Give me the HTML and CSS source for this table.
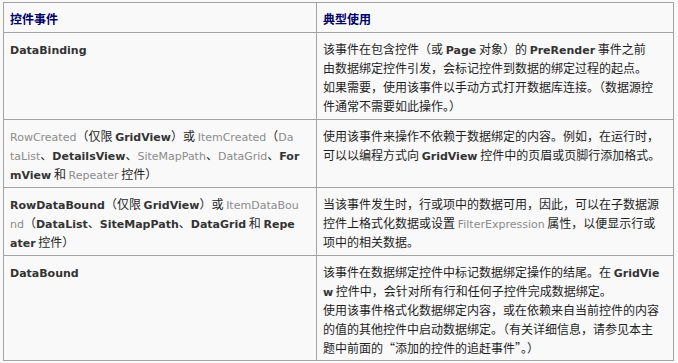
FILE: index.html
```html
<!DOCTYPE html>
<html lang="zh-CN">
<head>
<meta charset="utf-8">
<title>控件事件</title>
<link rel="stylesheet" href="styles.css">
</head>
<body>
<table class="events">
  <thead>
    <tr>
      <th class="col-event"><div class="ln">控件事件</div></th>
      <th class="col-use"><div class="ln">典型使用</div></th>
    </tr>
  </thead>
  <tbody>
    <tr class="r1">
      <td><div class="ln"><span class="b">DataBinding</span></div></td>
      <td>
        <div class="ln">该事件在包含控件（或 <span class="b">Page</span> 对象）的 <span class="b">PreRender</span> 事件之前</div>
        <div class="ln">由数据绑定控件引发，会标记控件到数据的绑定过程的起点。</div>
        <div class="ln">如果需要，使用该事件以手动方式打开数据库连接。（数据源控</div>
        <div class="ln">件通常不需要如此操作。）</div>
      </td>
    </tr>
    <tr class="r2">
      <td>
        <div class="ln"><span class="g">RowCreated</span>（仅限 <span class="b">GridView</span>）或 <span class="g">ItemCreated</span>（<span class="g">Da</span></div>
        <div class="ln"><span class="g">taList</span>、<span class="b">DetailsView</span>、<span class="g">SiteMapPath</span>、<span class="g">DataGrid</span>、<span class="b">For</span></div>
        <div class="ln"><span class="b">mView</span> 和 <span class="g">Repeater</span> 控件）</div>
      </td>
      <td>
        <div class="ln">使用该事件来操作不依赖于数据绑定的内容。例如，在运行时，</div>
        <div class="ln">可以以编程方式向 <span class="b">GridView</span> 控件中的页眉或页脚行添加格式。</div>
      </td>
    </tr>
    <tr class="r3">
      <td>
        <div class="ln"><span class="b">RowDataBound</span>（仅限 <span class="b">GridView</span>）或 <span class="g">ItemDataBou</span></div>
        <div class="ln"><span class="g">nd</span>（<span class="b">DataList</span>、<span class="b">SiteMapPath</span>、<span class="b">DataGrid</span> 和 <span class="b">Repe</span></div>
        <div class="ln"><span class="b">ater</span> 控件）</div>
      </td>
      <td>
        <div class="ln">当该事件发生时，行或项中的数据可用，因此，可以在子数据源</div>
        <div class="ln">控件上格式化数据或设置 <span class="g">FilterExpression</span> 属性，以便显示行或</div>
        <div class="ln">项中的相关数据。</div>
      </td>
    </tr>
    <tr class="r4">
      <td><div class="ln"><span class="b">DataBound</span></div></td>
      <td>
        <div class="ln">该事件在数据绑定控件中标记数据绑定操作的结尾。在 <span class="b">GridVie</span></div>
        <div class="ln"><span class="b">w</span> 控件中，会针对所有行和任何子控件完成数据绑定。</div>
        <div class="ln">使用该事件格式化数据绑定内容，或在依赖来自当前控件的内容</div>
        <div class="ln">的值的其他控件中启动数据绑定。（有关详细信息，请参见本主</div>
        <div class="ln">题中前面的“添加的控件的追赶事件”。）</div>
      </td>
    </tr>
  </tbody>
</table>
</body>
</html>
```
FILE: styles.css
```css
html, body {
  margin: 0;
  padding: 0;
  background: #f9f9f9;
}
body {
  padding: 2px 0 0 3px;
  font-family: "Noto Sans CJK SC", "DejaVu Sans", sans-serif;
  font-size: 12px;
  line-height: 19px;
  color: #1e1e1e;
}
.events {
  border-collapse: separate;
  border-spacing: 0;
  table-layout: fixed;
  width: 671px;
  border-left: 1px solid #a3a3a3;
  border-top: 1px solid #a3a3a3;
}
.events th, .events td {
  border-right: 1px solid #a3a3a3;
  border-bottom: 1px solid #a3a3a3;
  padding: 6px 6px 4px 6px;
  vertical-align: top;
  text-align: left;
}
.col-event { width: 300px; }
.col-use { width: 344px; }
.events th {
  font-weight: bold;
  color: #000066;
}
.ln {
  white-space: nowrap;
  height: 19px;
  overflow: visible;
}
.b {
  font-family: "DejaVu Sans", sans-serif;
  font-weight: bold;
  font-size: 11px;
  line-height: 1;
  color: #333333;
}
.g {
  font-family: "DejaVu Sans", sans-serif;
  font-size: 11px;
  line-height: 1;
  color: #8c8c8c;
}
.r4 td { padding-bottom: 3px; }
```
